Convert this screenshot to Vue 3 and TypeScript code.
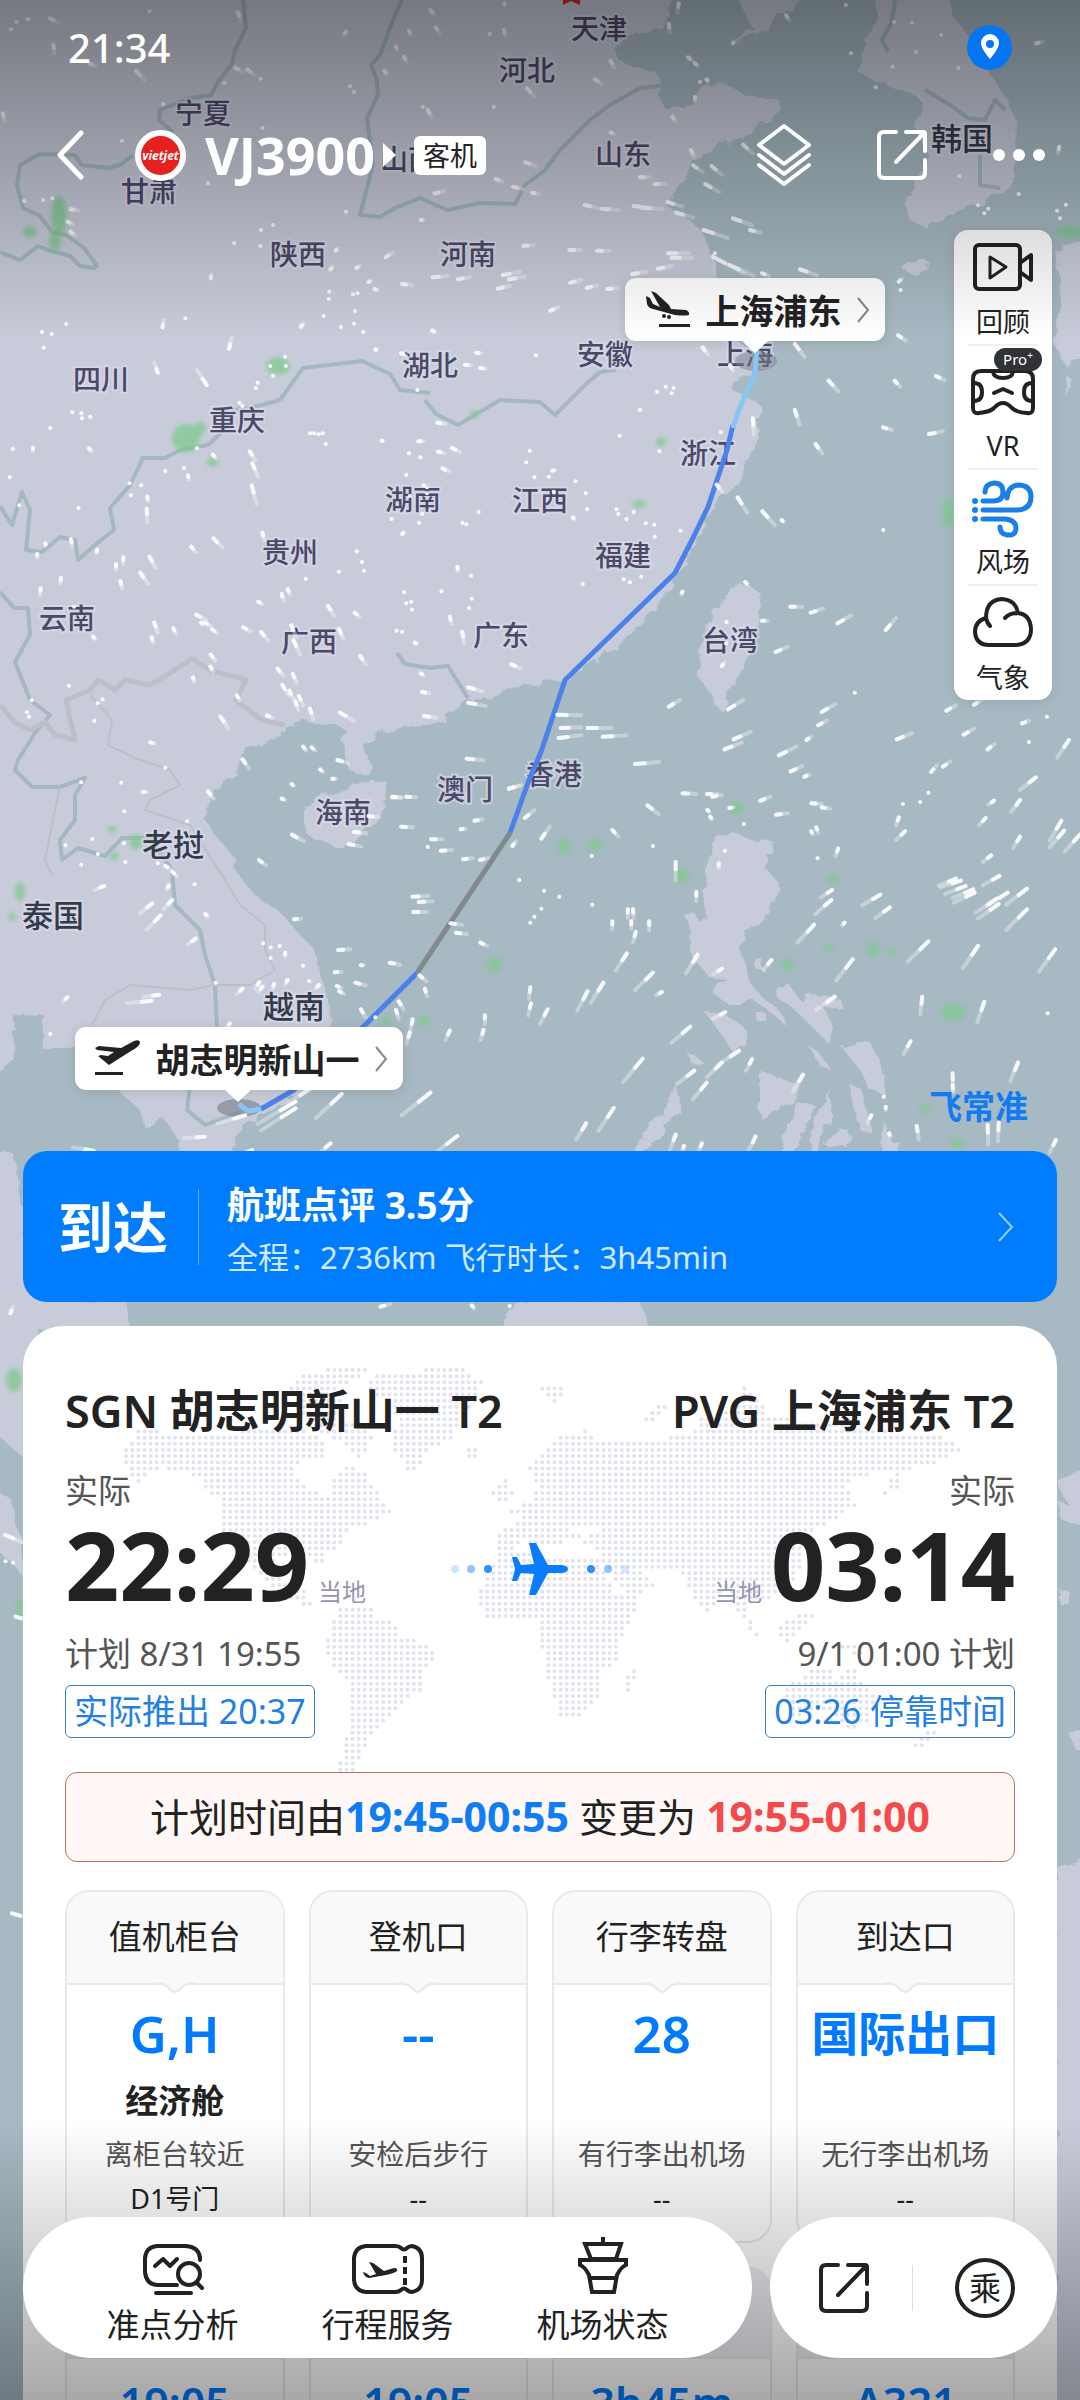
<script setup lang="ts">
type Pair = [number, number]

interface WindTile {
  x: number
  y: number
  heads: string
}

interface Streak {
  x1: number
  y1: number
  x2: number
  y2: number
  mx: number
  my: number
}

interface Place {
  name: string
  x: number
  y: number
  country?: boolean
}

interface InfoCard {
  title: string
  value: string
  cjk?: boolean
  sub?: string
  hint?: string
  detail?: string
}

const places: Place[] = [
  { name: '天津', x: 599, y: 28 },
  { name: '河北', x: 527, y: 70 },
  { name: '宁夏', x: 203, y: 113 },
  { name: '甘肃', x: 149, y: 191 },
  { name: '山西', x: 408, y: 159 },
  { name: '山东', x: 623, y: 154 },
  { name: '陕西', x: 298, y: 254 },
  { name: '河南', x: 468, y: 254 },
  { name: '四川', x: 101, y: 379 },
  { name: '湖北', x: 430, y: 365 },
  { name: '安徽', x: 605, y: 354 },
  { name: '上海', x: 745, y: 354 },
  { name: '重庆', x: 237, y: 420 },
  { name: '浙江', x: 708, y: 453 },
  { name: '湖南', x: 413, y: 499 },
  { name: '江西', x: 540, y: 500 },
  { name: '贵州', x: 290, y: 552 },
  { name: '福建', x: 623, y: 555 },
  { name: '云南', x: 67, y: 618 },
  { name: '广西', x: 309, y: 641 },
  { name: '广东', x: 501, y: 635 },
  { name: '台湾', x: 730, y: 640 },
  { name: '澳门', x: 465, y: 789 },
  { name: '香港', x: 554, y: 774 },
  { name: '海南', x: 343, y: 812 },
  { name: '老挝', x: 173, y: 845, country: true },
  { name: '泰国', x: 53, y: 916, country: true },
  { name: '越南', x: 294, y: 1007, country: true },
  { name: '韩国', x: 962, y: 139, country: true },
]

// Each entry is "head x, head y, tail dx, tail dy" in a third-of-a-pixel grid of its tile.
const windTiles: WindTile[] = [
  {
    x: 0,
    y: 0,
    heads:
      '145 55 25 15|80 57 5 0|48 66 0 0|32 88 0 0|434 34 0 0|155 135 3 25|690 36 10 28|260 190 20 10|395 212 25 30|683 203 22 12|718 208 22 18|757 236 0 0|652 248 0 0|474 313 0 0|1016 259 0 0|1028 276 0 0|1250 30 12 15|1265 82 12 18|1005 95 -8 12|1188 92 4 14|1150 140 3 8|1173 170 8 16|1116 213 8 10|1422 102 0 0|1463 90 5 18|1465 10 0 5|1530 265 22 24|1228 320 0 0|1242 330 12 22|1434 320 0 0|8 340 6 22|354 423 0 0|762 384 0 0|850 480 0 0|604 550 0 0|205 628 22 3|196 665 16 8|205 695 12 10|125 600 0 0|70 603 0 0|152 595 0 0|1005 635 0 0|1222 660 8 0|1262 580 28 -6|1440 537 20 8|1490 560 30 8|1525 487 30 10|1545 578 20 4|793 675 0 0|758 690 0 0|756 738 0 0|680 729 0 0|975 752 5 -6|1120 772 20 -14|960 808 6 -8|1035 804 10 -6|1070 846 8 -4|1088 867 8 3|1168 852 30 3|1256 832 45 -4|1330 838 35 -7|1460 825 50 -9|1478 838 45 -8|1446 866 35 -9|1520 738 30 -3|612 835 2 -12|956 875 0 0|955 897 0 0|1025 883 0 0|1038 880 0 0|1031 933 0 0|940 948 0 0|874 980 8 -10|990 981 0 0|1028 971 0 0|1055 996 0 0|1255 992 10 5|192 972 0 0|122 996 0 0|150 1002 0 0|127 1043 0 0|472 982 3 -22|538 955 0 0|665 1046 8 -32|458 1118 -10 -30|600 1155 -28 -45|785 1098 0 0|828 1070 0 0|830 1098 0 0|793 1127 0 0|748 1148 0 0|743 1164 0 0|1165 1060 15 6|1383 1058 15 2|1350 1094 18 2|1395 1104 15 2|1090 1048 4 2|1212 1170 0 0|1556 1066 0 0',
  },
  {
    x: 540,
    y: 0,
    heads:
      '403 10 -4 28|374 72 3 26|205 182 10 20|160 238 20 14|430 172 12 10|450 190 8 8|465 245 0 0|484 238 4 6|450 292 0 10|715 46 8 15|385 350 8 14|205 397 10 5|888 15 0 0|560 130 4 -6|903 160 0 0|1080 68 0 0|1092 156 0 0|1165 105 0 0|1215 204 0 0|1440 130 20 -5|975 262 0 0|1028 66 0 0|1024 200 0 0|438 450 12 24|590 434 28 26|445 496 26 20|498 498 30 26|480 552 40 24|290 532 30 0|333 553 30 -2|370 606 44 14|395 638 50 14|130 615 40 10|180 626 48 4|272 618 40 4|296 623 60 5|560 655 55 20|610 690 30 8|475 690 70 24|502 770 90 50|550 795 70 32|645 820 20 8|85 750 35 0|166 752 35 0|372 760 60 0|382 773 60 0|342 806 40 -8|268 822 40 -6|88 848 32 -8|136 864 30 -8|196 867 30 -2|30 932 24 -10|755 808 50 18|508 760 0 0|1508 440 -4 20|1218 528 0 0|1390 582 0 0|1290 640 0 0|1302 626 0 0|1272 616 0 0|1502 632 0 0|1527 614 0 0|1510 655 0 0|1042 845 8 -8|1047 870 0 0|1040 1006 22 16|740 1032 28 38|472 1042 16 22|838 1142 28 32|1150 1128 24 12|1030 1142 16 18|552 1095 8 16|365 1160 0 0|388 1164 0 0|340 1175 0 0|382 1180 0 0',
  },
  {
    x: 0,
    y: 400,
    heads:
      '210 37 0 0|236 40 0 0|238 55 0 0|262 50 0 0|146 84 0 0|96 143 0 10|258 145 8 8|37 147 0 0|28 232 0 0|695 8 0 0|704 18 0 0|900 100 0 0|912 100 0 0|925 103 0 0|937 100 0 0|946 132 0 0|725 154 16 26|733 190 16 40|731 256 14 55|572 145 0 0|618 164 10 12|480 213 0 0|534 203 0 0|546 226 2 14|376 250 0 0|410 256 0 0|380 286 0 0|428 290 2 14|426 326 2 40|56 316 0 0|228 324 0 0|1108 122 6 0|1215 124 16 0|1270 68 24 4|1312 144 24 12|1272 155 20 5|1188 160 0 0|1221 172 0 0|1285 205 20 10|1180 225 0 0|1240 262 0 0|1230 256 0 0|1190 288 0 0|1240 280 0 0|1137 357 0 0|1217 368 0 0|1168 402 6 -6|1343 369 0 0|1354 373 0 0|1390 336 0 0|1538 152 0 0|1528 187 0 0|1552 232 0 0|1226 342 0 0|132 430 0 8|108 462 0 10|206 418 4 20|282 450 -2 10|358 472 0 20|337 492 0 18|434 470 18 34|407 518 24 34|350 544 4 20|177 534 -2 16|118 565 -2 20|620 415 26 28|555 440 14 16|762 398 6 22|215 620 0 0|270 710 8 8|448 668 10 30|503 684 8 18|440 712 6 16|570 644 28 16|595 668 18 12|584 668 6 6|616 688 14 12|706 682 22 12|758 696 22 26|836 568 6 16|818 582 6 20|888 537 0 0|750 605 12 8|984 515 0 0|1051 486 0 0|1057 512 0 0|1036 454 0 0|953 618 16 28|1030 638 14 12|846 676 14 34|852 720 20 44|985 688 12 28|1174 577 0 0|1180 610 0 0|1194 605 0 0|1196 629 0 0|1282 574 0 0|1328 500 2 14|1368 527 0 0|1370 596 0 0|1362 624 0 0|1306 650 6 22|1342 695 6 36|1152 692 0 0|1168 695 0 0|1205 728 6 4|1046 768 16 24|1496 690 0 0|1485 793 26 12|1222 820 8 6|1226 876 20 4|1360 862 40 12|1360 908 50 10|1232 948 36 6|988 938 40 24|612 764 14 18|611 800 8 14|560 832 4 12|806 806 16 20|850 822 12 26|820 855 18 30|840 872 12 24|868 888 12 28|858 905 8 24|900 926 10 32|688 886 8 16|640 950 24 36|775 946 16 8|704 1078 20 28|880 1040 10 12|905 1042 10 10|980 1080 32 10|930 1108 8 8|965 1136 10 0|847 1152 6 6|1355 1076 48 4|1478 1166 30 -10|1140 1190 24 4|1180 1190 28 2|604 1174 16 22|818 1196 10 4|200 857 0 0|298 898 0 0|284 910 0 0|92 901 0 0|78 937 0 0|84 950 0 0|274 962 0 0|436 1027 14 4|480 1103 0 0|352 1148 0 0|415 1176 12 0|236 1147 0 0',
  },
  {
    x: 540,
    y: 300,
    heads:
      '290 329 0 0|231 407 0 0|525 397 0 0|347 454 0 0|36 512 8 -2|26 530 0 0|103 544 0 0|133 580 0 0|137 628 0 0|96 652 4 6|222 628 0 0|227 642 0 0|251 657 0 0|272 636 0 0|307 670 0 0|332 674 0 0|333 710 0 0|408 692 0 0|243 838 0 0|261 847 0 0|294 830 0 0|124 852 0 0|40 575 0 0|513 554 16 22|618 355 4 50|574 592 28 46|646 634 36 42|702 660 6 6|740 330 14 44|800 432 20 28|996 382 26 8|1130 402 40 -8|997 690 0 0|596 846 8 8|414 875 -4 8|727 920 34 0|786 938 36 -12|645 962 16 0|864 970 40 -24|1004 990 30 -36|684 1056 36 -16|542 966 0 0|528 1098 8 -10|540 1030 0 0|374 1220 32 -20|546 1228 44 -28|818 1236 40 -24|1180 1232 28 -16|1260 1214 20 -12|914 1178 0 0|1472 1250 0 0|50 1244 70 2',
  },
  {
    x: 0,
    y: 780,
    heads:
      '848 164 34 20|752 240 20 16|854 418 20 -2|982 510 36 -2|972 577 20 -2|1048 556 8 0|1132 548 30 6|1032 608 30 8|978 618 14 6|985 634 14 8|1028 156 36 4|1012 192 36 8|1070 108 30 4|1165 140 34 2|1138 52 30 0|1252 178 34 0|1242 201 0 0|1280 212 34 -2|1338 148 14 -2|1378 122 24 -4|1345 238 28 -4|1394 240 24 -6|1488 198 10 -14|1524 114 28 -24|1478 26 36 -10|1508 300 0 0|1198 350 46 -2|1216 366 40 -2|1200 396 40 0|1308 430 34 4|1324 458 32 4|1395 488 20 10|1540 428 0 0|1552 410 0 0|1218 586 20 18|1234 626 6 22|1158 664 14 24|1150 690 8 26|1198 718 -6 34|1190 758 -10 34|1048 688 14 24|1306 752 -12 28|1408 706 0 26|1404 750 -8 30|1540 622 -4 34|1542 670 -8 36|1090 712 0 0|302 318 -28 12|442 370 -36 30|466 406 -40 44|500 360 -26 28|490 316 -6 12|268 177 0 0|190 196 0 0|284 222 0 0|364 246 0 0|360 190 0 0|236 254 0 0|458 250 0 0|480 258 16 10|500 275 14 14|565 313 0 0|596 402 8 8|568 476 -24 18|543 124 0 0|361 94 0 0|764 490 0 0|786 502 0 0|812 498 0 0|828 518 0 12|786 534 0 0|880 557 0 0|835 600 -6 12|898 603 0 0|926 615 -10 12|753 606 -12 20|762 620 -12 16|704 626 -16 16|796 612 -4 14|626 608 0 0|668 730 -8 10|462 644 -45 6|440 662 -70 8|196 652 -12 12|146 762 0 0|992 942 -74 72|1250 938 -84 68|1328 1068 -76 60|960 1090 -36 32|895 930 -60 40|858 965 -110 66|858 985 -100 66|712 1006 -80 24|595 1070 -60 4|272 1112 -60 -10|732 1110 -40 18',
  },
  {
    x: 540,
    y: 720,
    heads:
      '60 24 60 -2|138 24 70 0|54 54 66 -8|182 50 70 -4|276 132 70 -6|562 58 50 -22|536 88 50 -20|694 106 50 -26|774 60 14 -10|728 154 34 -16|768 170 14 -6|808 16 24 -14|1036 58 44 -18|1230 44 30 -18|1300 88 20 -16|1400 10 20 -8|1420 66 0 0|1536 60 -34 52|1440 172 -46 38|1136 156 16 -20|1170 140 22 -16|1128 218 0 0|1104 246 0 0|1054 252 0 0|1318 242 -16 12|1394 240 -26 36|1294 294 -20 22|1042 292 -8 24|1060 334 -26 26|1514 302 -34 60|1522 332 -42 50|1568 344 -44 50|1394 350 -20 34|1310 406 -24 20|414 220 40 2|485 222 30 0|500 230 28 -4|312 256 32 26|210 330 18 20|328 378 0 0|150 408 0 0|4 356 24 -36|486 270 6 6|494 290 6 8|550 264 12 -2|592 312 0 0|640 242 30 -12|686 284 34 -4|788 250 30 2|818 262 24 4|788 334 4 8|802 322 6 16|866 386 -8 22|806 415 0 0|537 392 0 0|519 430 0 14|394 426 0 55|454 516 0 28|12 512 0 0|56 530 0 0|152 554 0 0|4 566 0 0|255 568 0 26|270 568 2 26|210 604 0 24|265 604 0 24|317 604 0 28|278 636 -8 30|252 700 -32 52|328 758 -52 52|354 816 -16 10|184 788 -36 60|138 814 -30 58|22 868 -22 44|458 704 -34 56|528 746 -24 16|672 720 -24 30|908 718 -48 64|848 510 -32 22|846 540 -46 42|988 524 -52 32|1016 562 -42 32|796 614 -48 54|884 608 -6 8|1208 476 -50 20|1222 482 -60 20|1236 498 -60 24|1258 508 -60 26|1262 518 -60 30|1334 468 -48 28|1326 536 -60 42|1358 518 -60 40|1332 552 -60 44|1414 506 -60 48|1414 568 -60 62|1128 664 -60 60|1272 678 -44 66|1496 688 -46 66|1110 830 -6 54|1290 846 -20 60|1474 880 0 0|1076 964 -20 38|856 830 -54 40|538 876 -36 20|436 920 -54 48|578 992 -60 42|528 1028 -44 44|448 1052 -50 40|484 1088 -40 50|298 1016 -56 70|214 1164 -44 68|134 1210 -28 48|616 1018 -18 34|764 1064 -30 50|1388 1028 -22 54|1198 1060 2 50|1198 1096 2 20|1300 1214 2 60|1332 1208 -2 56|1094 1218 6 40|1498 1260 -18 38|998 1130 0 0|1004 1160 0 10|962 1186 -10 22|1014 1240 4 10|394 1244 -16 44|418 1278 -4 12|470 1270 -8 22|626 1250 -20 42',
  },
  {
    x: 0,
    y: 1300,
    heads:
      '15 705 60 26|45 950 40 12|16 784 0 0|38 788 0 0|30 40 8 -20|1105 20 28 -8|1370 16 8 10|1480 18 0 0|35 1840 60 18',
  },
]

const streaks: Streak[] = windTiles.flatMap((tile) =>
  tile.heads.split('|').map((entry) => {
    const [hx, hy, dx, dy] = entry.split(' ').map(Number)
    const x1 = tile.x + hx / 2.904
    const y1 = tile.y + hy / 3
    const x2 = x1 + dx / 2.904
    const y2 = y1 + dy / 3
    return { x1, y1, x2, y2, mx: x1 + (x2 - x1) * 0.4, my: y1 + (y2 - y1) * 0.4 }
  }),
)

const rainSpots = [
  [59, 216, 8, 20], [30, 232, 7, 6], [55, 242, 6, 10], [278, 366, 12, 9], [186, 438, 14, 14], [200, 428, 6, 7],
  [213, 462, 6, 5], [474, 414, 4, 4], [661, 442, 5, 5], [639, 504, 7, 4], [948, 513, 6, 15], [1070, 232, 14, 6],
  [136, 842, 7, 8], [114, 856, 5, 4], [112, 829, 4, 4], [20, 892, 5, 10], [12, 917, 4, 4], [494, 965, 7, 8],
  [386, 1021, 6, 5], [423, 1021, 6, 5], [737, 808, 6, 7], [564, 847, 6, 9], [595, 845, 7, 6], [682, 876, 7, 8],
  [833, 879, 6, 5], [828, 948, 5, 4], [873, 949, 6, 8], [891, 951, 4, 4], [788, 965, 6, 6], [953, 1012, 12, 9],
  [957, 1144, 7, 5], [925, 1109, 5, 5], [14, 1380, 8, 12], [20, 1608, 4, 10],
]

const continents: Pair[][] = [
  [[138, 1430], [200, 1434], [276, 1429], [311, 1432], [328, 1444], [326, 1458], [296, 1463], [292, 1477], [307, 1486], [326, 1500], [334, 1478], [345, 1466], [364, 1472], [378, 1492], [391, 1511], [374, 1521], [349, 1530], [338, 1548], [325, 1552], [325, 1568], [312, 1560], [290, 1552], [276, 1562], [276, 1578], [300, 1584], [314, 1608], [290, 1600], [262, 1578], [240, 1555], [224, 1532], [222, 1502], [206, 1488], [196, 1476], [160, 1466], [136, 1484], [122, 1456]],
  [[288, 1390], [296, 1378], [326, 1369], [368, 1369], [356, 1380], [340, 1388], [344, 1420], [366, 1424], [374, 1440], [356, 1460], [340, 1440], [310, 1428], [296, 1408]],
  [[366, 1386], [376, 1376], [410, 1376], [424, 1369], [466, 1369], [482, 1382], [474, 1406], [460, 1420], [453, 1441], [428, 1447], [416, 1470], [405, 1468], [391, 1444], [398, 1424], [388, 1404]],
  [[462, 1448], [478, 1449], [480, 1458], [468, 1459]],
  [[336, 1610], [373, 1608], [378, 1620], [392, 1621], [400, 1635], [430, 1644], [436, 1653], [423, 1674], [422, 1690], [404, 1701], [392, 1718], [370, 1734], [362, 1756], [353, 1772], [338, 1772], [346, 1738], [352, 1704], [352, 1680], [338, 1674], [325, 1652], [330, 1632]],
  [[492, 1490], [506, 1480], [514, 1498], [494, 1502]],
  [[541, 1388], [566, 1386], [560, 1400], [552, 1405]],
  [[640, 1424], [660, 1402], [668, 1406], [650, 1426]],
  [[498, 1531], [521, 1520], [509, 1511], [530, 1500], [537, 1486], [528, 1470], [541, 1452], [560, 1436], [586, 1431], [596, 1442], [660, 1443], [672, 1434], [694, 1434], [697, 1420], [734, 1411], [742, 1386], [755, 1392], [768, 1417], [850, 1424], [902, 1433], [943, 1436], [961, 1450], [936, 1464], [905, 1470], [897, 1490], [884, 1495], [892, 1474], [850, 1475], [847, 1487], [856, 1504], [838, 1520], [812, 1530], [803, 1552], [797, 1578], [768, 1600], [742, 1598], [750, 1618], [766, 1648], [754, 1638], [738, 1612], [728, 1584], [716, 1598], [710, 1618], [697, 1602], [686, 1580], [676, 1572], [642, 1572], [655, 1586], [634, 1599], [637, 1608], [622, 1634], [617, 1662], [601, 1672], [600, 1694], [586, 1714], [561, 1716], [552, 1696], [546, 1668], [542, 1646], [541, 1622], [488, 1620], [479, 1604], [482, 1580], [500, 1558], [498, 1548]],
  [[622, 1674], [636, 1668], [632, 1690], [622, 1697]],
  [[786, 1688], [810, 1670], [828, 1669], [838, 1680], [852, 1668], [868, 1686], [877, 1702], [868, 1722], [850, 1730], [826, 1711], [788, 1716]],
  [[774, 1630], [800, 1612], [812, 1616], [790, 1642], [776, 1638]],
  [[838, 1640], [866, 1646], [866, 1660], [842, 1650]],
  [[926, 1728], [938, 1728], [922, 1748], [908, 1754]],
]
const seas: Pair[][] = [
  [[520, 1540], [545, 1548], [575, 1540], [600, 1550], [600, 1556], [540, 1556], [514, 1548]],
  [[570, 1530], [590, 1524], [600, 1532], [584, 1537]],
  [[602, 1566], [608, 1566], [624, 1594], [618, 1596]],
]

function inside(x: number, y: number, shape: Pair[]): boolean {
  let hit = false
  for (let i = 0, j = shape.length - 1; i < shape.length; j = i++) {
    const [xi, yi] = shape[i]
    const [xj, yj] = shape[j]
    if (yi > y !== yj > y && x < ((xj - xi) * (y - yi)) / (yj - yi) + xi) hit = !hit
  }
  return hit
}

const worldDots: Pair[] = []
for (let y = 1370; y < 1772; y += 6.15) {
  for (let x = 120; x < 964; x += 6.12) {
    if (continents.some((c) => inside(x, y, c)) && !seas.some((s) => inside(x, y, s))) worldDots.push([x, y])
  }
}

const cards: InfoCard[] = [
  { title: '值机柜台', value: 'G,H', sub: '经济舱', hint: '离柜台较近', detail: 'D1号门' },
  { title: '登机口', value: '--', hint: '安检后步行', detail: '--' },
  { title: '行李转盘', value: '28', hint: '有行李出机场', detail: '--' },
  { title: '到达口', value: '国际出口', cjk: true, hint: '无行李出机场', detail: '--' },
]

const moreCards: string[] = ['19:05', '19:05', '3h45m', 'A321']
</script>

<template>
  <main class="screen">
    <svg class="map" viewBox="0 0 1080 2400" preserveAspectRatio="xMidYMin slice" aria-hidden="true">
      <defs>
        <filter id="coast" x="-2%" y="-2%" width="104%" height="104%">
          <feTurbulence type="fractalNoise" baseFrequency="0.07" numOctaves="3" seed="4" />
          <feDisplacementMap in="SourceGraphic" scale="11" />
        </filter>
        <filter id="soft"><feGaussianBlur stdDeviation="2" /></filter>
      </defs>
      <rect width="1080" height="2400" fill="#a7b9c3" />
      <g fill="#c8ccda" filter="url(#coast)">
        <path
          d="M-20-20H680L665 25 645 32 630 35 614 48 620 62 640 68 655 72 663 82 658 95 665 108 685 108 700 92 722 82 745 95 780 100 783 112 770 122 752 128 735 140 720 145 700 158 690 165 685 180 672 195 668 207 690 220 703 233 714 262 722 285 735 340 758 352 752 372 735 382 732 390 748 398 760 405 758 438 750 460 738 483 727 490 715 503 708 520 700 535 690 550 680 572 672 590 650 612 625 638 595 660 565 680 530 684 500 695 470 700 455 710 440 722 400 728 380 733 364 748 372 765 370 775 350 772 345 755 342 740 348 730 330 725 305 722 290 727 258 745 240 755 235 775 220 788 203 817 215 835 232 855 235 870 255 895 280 912 300 935 315 950 328 1000 330 1020 325 1060 315 1085 270 1110 240 1130 236 1145 200 1175 178 1170 180 1142 165 1120 145 1128 140 1110 118 1090 100 1060 75 1048 43 1050 43 1015 14 1016 14 1060 -20 1090Z"
        />
        <path d="M738-20V0L748 18 755 30 735 38V43L760 32 775 20 800 0V-20ZM878-20L875 25 865 48 857 72 880 82 915 95 925 105 915 130 930 158 915 180 912 195 905 205 910 220 925 228 965 208 1000 195 1010 185 1017 160 1015 120 1008 100 990 75 975 45 952 15V-20Z" />
        <path d="M903 270Q912 258 929 262 930 272 915 276ZM1055 250L1100 236V350L1066 366 1054 345 1062 300ZM1066 375L1072 380 1066 396Z" />
        <path d="M746 583L762 595 758 620 750 650 742 670 728 695 722 711 715 705 712 695 697 675 702 640 712 615 728 593ZM340 790L355 783 385 780 388 795 375 820 362 835 345 848 325 842 308 835 305 815 315 798Z" />
        <path d="M714 835L735 832 755 842 765 838 773 842 767 870 779 883 776 898 768 915 747 932 740 950 752 985 765 1000 780 1010 786 1025 765 1008 750 998 742 1005 730 1005 715 995 716 985 728 980 710 978 695 960 690 935 686 915 692 910 700 922 708 918 704 900 706 870Z" />
        <path d="M775 985L790 985 800 1000 810 995 825 1010 835 1030 830 1045 805 1020 795 1010 778 998ZM805 995L840 998 842 1008 826 1006ZM705 1012L722 1013 745 1028 745 1045 733 1052 722 1035ZM840 1045L870 1042 880 1060 886 1095 870 1090 858 1068ZM850 1085L862 1090 868 1120 875 1135 860 1130ZM760 1070L800 1085 795 1100 775 1110 760 1118ZM795 1103L815 1105 805 1130 790 1160H775L790 1120ZM830 1090V1120L815 1160H806L815 1120ZM808 1045L818 1052 832 1070 820 1066ZM824 1145L838 1128 850 1132 846 1146ZM756 960H763L764 970H757ZM756 1013H766V1021H757ZM690 1055L704 1062 700 1066 692 1064Z" />
        <path d="M675 1085L683 1115 665 1125 650 1145 635 1162 630 1155 660 1115ZM884 1120L890 1140 900 1142 898 1156H880ZM-20 1152H12L22 1200 26 1290 60 1302 126 1300 130 1330 40 1330 26 1460 -20 1420ZM496 1330L520 1302 640 1300 650 1330Z" />
        <path d="M1056 1480L1080 1470 1100 1500 1070 1510ZM1056 1500L1100 1510 1090 1530 1062 1520ZM1060 1590H1068V1604H1060ZM1070 1735L1100 1720V1752L1076 1750ZM1056 1868L1100 1850V2420H1056Z" />
        <path d="M-20 1480L12 1500 26 1570 40 1600 10 1560 -20 1540Z" />
      </g>
      <g class="rivers">
        <path d="M243 0L246 28 235 50 232 64 218 82 211 95 190 98 160 110 159 120 173 132 M133 155L120 165 108 168 82 165 75 155 40 154 20 165 17 185 23 208 40 216 52 232 66 235 84 248 97 266 94 268 80 266 70 256 48 250 38 246 20 260 0 252" />
        <path d="M402 0L393 20 380 55 371 65 377 80 378 95 367 118 373 165 360 215 380 217 395 208 420 198 447 210 480 203 515 204 525 185 545 170 560 150 590 120 610 105 640 88 667 85" />
        <path d="M280 400L303 368 362 361 390 374 400 390 430 393 M0 506L12 525 22 492 30 510 26 550 42 552 60 537 75 540 78 560 95 545 114 530 110 508 130 485 142 460 142 458 165 458 180 450 208 445 222 432 235 410 262 405 280 400" />
        <path d="M425 400L436 414 458 425 500 400 540 402 555 415 585 385 600 372 616 370 M0 592L14 608 28 608 30 635 15 662 30 700 50 715 35 733 18 760 15 770 32 787 60 787 85 778 75 795 75 820 60 840 62 860 78 848 105 856 122 838 150 838 172 870 175 905 200 930 205 955 215 985 217 1030 190 1085 187 1110 205 1125 240 1112" />
        <path d="M397 653L405 664 430 668 448 666 468 698 M895 0L892 22 882 40 888 52 M925 90L950 105 968 118 985 120 995 100 1005 110 M980 155V185L1000 188" />
      </g>
      <g class="borders">
        <path stroke-width="5" d="M0 704L14 722 30 730 45 722 55 735 75 740 66 700 90 690 98 680 115 690 125 680 150 685 172 672 192 658 210 670 246 680 236 700 262 720 285 725" />
        <path stroke-width="2" d="M90 695L112 720 108 745 135 758 170 770 180 785 150 800 145 810 190 825 225 880 240 905 265 925 265 950 275 970 250 985 215 985 190 990 130 985 105 1000 92 1025 M60 787L55 810 45 860 52 875" />
      </g>
      <g fill="#7fc98f" filter="url(#soft)" opacity="0.75">
        <ellipse v-for="(s, i) in rainSpots" :key="i" :cx="s[0]" :cy="s[1]" :rx="s[2]" :ry="s[3]" />
      </g>
      <path d="M571-10L575 0H580V5L571 1 563 5V0Z" fill="#d8232c" />
      <g class="places">
        <text v-for="p in places" :key="p.name" :x="p.x" :y="p.y + 11" :class="{ country: p.country }">{{ p.name }}</text>
      </g>
      <ellipse cx="756" cy="361" rx="21" ry="10" fill="#777b88" opacity="0.5" />
      <ellipse cx="239" cy="1108" rx="22" ry="9" fill="#777b88" opacity="0.6" />
      <g fill="none" stroke-width="5" stroke-linejoin="round">
        <path stroke="#4c80ea" d="M733 425L727 450 708 507 692 540 675 573 565 680 541 752 529 780 510 833M417 973L362 1028 294 1090 261 1109" />
        <path stroke="#82898e" d="M510 833L417 973" />
        <path stroke="#86c6f5" d="M757 345L755 375 745 395 737 415 733 428M239 1104L248 1111 261 1109" />
      </g>
      <g stroke="#fff" stroke-linecap="round" stroke-width="4">
        <line v-for="(s, i) in streaks" :key="'t' + i" :x1="s.x1" :y1="s.y1" :x2="s.x2" :y2="s.y2" opacity="0.35" />
        <line v-for="(s, i) in streaks" :key="'h' + i" :x1="s.x1" :y1="s.y1" :x2="s.mx" :y2="s.my" opacity="0.85" />
      </g>
    </svg>

    <section class="hero">
      <header class="top">
        <div class="status">
          <time>21:34</time>
          <span class="locate">
            <svg width="20" height="26" viewBox="0 0 20 26"><path fill="#fff" fill-rule="evenodd" d="M10 0a9 9 0 0 1 9 9c0 6-9 16-9 16S1 15 1 9a9 9 0 0 1 9-9Zm0 6a4 4 0 1 0 0 8 4 4 0 0 0 0-8Z" /></svg>
          </span>
        </div>
        <nav class="bar">
          <button class="back" aria-label="返回">
            <svg width="28" height="50" viewBox="0 0 28 50"><path d="M25 3L4 25 25 47" fill="none" stroke="#fff" stroke-width="5" stroke-linecap="round" stroke-linejoin="round" /></svg>
          </button>
          <span class="airline"><span>vietjet</span></span>
          <h1>VJ3900</h1>
          <svg class="tri" width="13" height="24" viewBox="0 0 13 24"><path d="M0 0L13 12 0 24Z" fill="#fff" /></svg>
          <span class="kind">客机</span>
          <button class="layers" aria-label="图层">
            <svg width="56" height="64" viewBox="0 0 56 64" fill="none" stroke="#fff" stroke-width="4" stroke-linejoin="round" stroke-linecap="round"><path d="M28 3L53 22 28 41 3 22Z" /><path d="M3 32L28 51 53 32M3 42L28 61 53 42" /></svg>
          </button>
          <button class="share" aria-label="分享">
            <svg width="52" height="52" viewBox="0 0 52 52" fill="none" stroke="#fff" stroke-width="4"><path d="M20 3H8Q3 3 3 8V44Q3 49 8 49H44Q49 49 49 44V31M30 3H47Q49 3 49 5V22M48 4L20 33" stroke-linecap="round" /></svg>
          </button>
          <button class="more" aria-label="更多">
            <svg width="54" height="14" viewBox="0 0 54 14" fill="#fff"><circle cx="7" cy="7" r="6" /><circle cx="27" cy="7" r="6" /><circle cx="47" cy="7" r="6" /></svg>
          </button>
        </nav>
      </header>

      <aside class="rail">
        <button class="tool first">
          <svg width="62" height="50" viewBox="0 0 62 50" fill="none" stroke="#222" stroke-width="4" stroke-linejoin="round"><rect x="3" y="3" width="45" height="44" rx="4" /><path d="M48 21L59 13V38L48 30" /><path d="M18 15L34 25 18 36Z" stroke-width="3" /></svg>
          <span>回顾</span>
        </button>
        <button class="tool vr">
          <em>Pro<sup>+</sup></em>
          <svg width="66" height="48" viewBox="0 0 66 48" fill="none" stroke="#222" stroke-width="4" stroke-linecap="round" stroke-linejoin="round"><path d="M11 3H55Q63 3 63 11V40Q63 46 57 45 46 44 42 40 33 30 24 40 20 44 9 45 3 46 3 40V11Q3 3 11 3Z" /><path d="M23 4Q24 10 33 10T43 4M4 15Q12 15 12 24T4 33M62 15Q54 15 54 24T62 33M24 25L33 21 42 25" /></svg>
          <span>VR</span>
        </button>
        <button class="tool">
          <svg width="62" height="58" viewBox="0 0 62 58" fill="none" stroke="#1a80e8" stroke-width="5" stroke-linecap="round"><path d="M11 21H21Q31 21 31 12T22 3Q13 4 13 12M11 30H46Q59 29 59 17T46 5Q36 6 35 18M11 39H33Q44 40 44 48T35 55Q28 54 28 47" /><path d="M3 21h0M3 30h0M3 39h0" stroke-width="6" /></svg>
          <span>风场</span>
        </button>
        <button class="tool">
          <svg width="62" height="52" viewBox="0 0 62 52" fill="none" stroke="#222" stroke-width="4" stroke-linecap="round"><path d="M14 22Q3 25 3 36 4 49 17 49H44Q59 48 59 33 58 17 44 17M14 22Q14 4 30 3 44 4 46 17M14 22Q15 27 18 30M46 17Q37 17 33 22" /></svg>
          <span>气象</span>
        </button>
      </aside>

      <button class="pin arrive">
        <svg width="46" height="40" viewBox="0 0 46 40" fill="#222"><path d="M1 6L5 8 8 14 15 17 6 1 11 3 24 15 26 19 41 20Q45 22 44 25 40 26 30 25L8 19Q3 18 2 14Z" /><circle cx="19" cy="26" r="2" /><circle cx="24" cy="27" r="2" /><rect x="14" y="34" width="31" height="3" /></svg>
        <span>上海浦东</span>
        <svg width="14" height="28" viewBox="0 0 14 28"><path d="M2 2L12 14 2 26" fill="none" stroke="#888" stroke-width="2" /></svg>
      </button>
      <button class="pin depart">
        <svg width="46" height="40" viewBox="0 0 46 40" fill="#222"><path d="M0 9L4 7 26 9 39 2Q45 0 45 4 44 8 36 12L14 26 3 17 6 16 13 17 19 13 2 11Z" /><rect x="0" y="33" width="28" height="3" /></svg>
        <span>胡志明新山一</span>
        <svg width="14" height="28" viewBox="0 0 14 28"><path d="M2 2L12 14 2 26" fill="none" stroke="#888" stroke-width="2" /></svg>
      </button>
      <span class="brand">飞常准</span>
    </section>

    <section class="sheet">
      <a class="banner" href="#">
        <strong class="state">到达</strong>
        <span class="summary">
          <b>航班点评 3.5分</b>
          <span>全程：2736km 飞行时长：3h45min</span>
        </span>
        <svg width="18" height="32" viewBox="0 0 18 32"><path d="M2 2L15 16 2 30" fill="none" stroke="#9ccbff" stroke-width="2" /></svg>
      </a>

      <article class="card">
        <svg class="world" viewBox="23 1326 1034 446" aria-hidden="true">
          <circle v-for="(d, i) in worldDots" :key="i" :cx="d[0]" :cy="d[1]" r="2" />
        </svg>
        <div class="route">
          <div class="end">
            <h2>SGN 胡志明新山一 T2</h2>
            <p class="muted">实际</p>
            <p class="clock"><b>22:29</b><small>当地</small></p>
            <p class="muted plan">计划 8/31 19:55</p>
            <p class="tag">实际推出 20:37</p>
          </div>
          <svg class="plane" width="186" height="62" viewBox="0 0 186 62" fill="#0a7cff">
            <circle cx="5" cy="31" r="4" opacity="0.2" /><circle cx="21" cy="31" r="4" opacity="0.45" /><circle cx="38" cy="31" r="4" opacity="0.85" />
            <path d="M79 5H86L98 27H112Q118 28 118 31T112 35H98L86 57H79L84 36 71 35 67 43H62L65 31 62 19H67L71 27 84 26Z" />
            <circle cx="141" cy="31" r="4" opacity="0.85" /><circle cx="158" cy="31" r="4" opacity="0.45" /><circle cx="175" cy="31" r="4" opacity="0.15" />
          </svg>
          <div class="end right">
            <h2>PVG 上海浦东 T2</h2>
            <p class="muted">实际</p>
            <p class="clock"><small>当地</small><b>03:14</b></p>
            <p class="muted plan">9/1 01:00 计划</p>
            <p class="tag">03:26 停靠时间</p>
          </div>
        </div>

        <p class="notice">计划时间由<b class="old">19:45-00:55</b> 变更为 <b class="new">19:55-01:00</b></p>

        <div class="grid">
          <section v-for="c in cards" :key="c.title" class="info">
            <h3>
              {{ c.title }}
              <svg width="40" height="12" viewBox="0 0 40 12"><path d="M0 1Q10 1 15 7 20 13 25 7 30 1 40 1" fill="#f9f9f9" stroke="#e9e9e9" stroke-width="2" /></svg>
            </h3>
            <strong :class="{ cjk: c.cjk }">{{ c.value }}</strong>
            <b>{{ c.sub }}</b>
            <span class="hint">{{ c.hint }}</span>
            <span class="detail">{{ c.detail }}</span>
          </section>
          <section v-for="(v, i) in moreCards" :key="i" class="info second">
            <h3></h3>
            <strong>{{ v }}</strong>
          </section>
        </div>
      </article>
    </section>

    <footer class="dock">
      <div class="pill menu">
        <button>
          <svg width="62" height="52" viewBox="0 0 62 52" fill="none" stroke="#222" stroke-width="4" stroke-linecap="round" stroke-linejoin="round"><path d="M58 17V15Q57 4 44 3H15Q4 4 3 15V29Q4 41 15 42H35M13 23L21 16 28 23 35 16M14 50H49" /><circle cx="47" cy="31" r="11" /><path d="M55 40L60 45" /></svg>
          <span>准点分析</span>
        </button>
        <button>
          <svg width="74" height="52" viewBox="0 0 74 52" fill="none" stroke="#222" stroke-width="4" stroke-linecap="round"><path d="M15 3H44Q48 3 50 5 53 8 56 5 58 3 61 3 71 5 71 15V37Q71 47 61 49 58 49 56 47 53 44 50 47 48 49 44 49H15Q4 48 3 37V15Q4 4 15 3Z" /><path d="M54 13V20M54 24V31M54 35V42" stroke-linecap="butt" /><path d="M12 29L15 30 19 33 25 31 18 19 22 20 33 28 43 25Q47 25 46 28 44 30 35 32L18 35Q13 34 12 29Z" fill="#222" stroke="none" /></svg>
          <span>行程服务</span>
        </button>
        <button>
          <svg width="52" height="58" viewBox="0 0 52 58" fill="none" stroke="#222" stroke-width="4"><path d="M26 0V6M8 7H44L39 22H14ZM3 23H49V28Q44 30 40 38L37 55H15L12 38Q8 30 3 28ZM12 41H40" /></svg>
          <span>机场状态</span>
        </button>
      </div>
      <div class="pill actions">
        <button aria-label="分享">
          <svg width="52" height="52" viewBox="0 0 52 52" fill="none" stroke="#222" stroke-width="4"><path d="M20 3H8Q3 3 3 8V44Q3 49 8 49H44Q49 49 49 44V31M30 3H47Q49 3 49 5V22M48 4L20 33" stroke-linecap="round" /></svg>
        </button>
        <i></i>
        <button class="ride">乘</button>
      </div>
    </footer>
  </main>
</template>

<style>
body {
  margin: 0;
}
</style>

<style scoped>
.screen {
  position: relative;
  height: 100vh;
  overflow: hidden;
  background: #a7b9c3;
  color: #222;
  font-family: "Noto Sans", "Noto Sans CJK SC", sans-serif;
}
.screen::before {
  content: "";
  position: absolute;
  inset: 0 0 auto;
  height: 340px;
  z-index: 2;
  background: linear-gradient(rgba(0, 0, 0, 0.41), rgba(0, 0, 0, 0));
  pointer-events: none;
}
.screen::after {
  content: "";
  position: absolute;
  inset: auto 0 0;
  height: 280px;
  z-index: 2;
  background: linear-gradient(rgba(0, 0, 0, 0), rgba(0, 0, 0, 0.34));
  pointer-events: none;
}
.map {
  position: absolute;
  inset: 0;
  width: 100%;
  height: 100%;
}
.rivers path {
  fill: none;
  stroke: #a4b8c1;
  stroke-width: 4;
  stroke-linejoin: round;
}
.borders path {
  fill: none;
  stroke: #bcbfcb;
  stroke-linejoin: round;
}
.places text {
  font-family: "Noto Sans CJK SC", sans-serif;
  font-size: 28px;
  font-weight: 500;
  text-anchor: middle;
  fill: #4c4868;
  stroke: rgba(216, 219, 235, 0.7);
  stroke-width: 4px;
  paint-order: stroke;
}
.places .country {
  font-size: 31px;
  fill: #343a48;
}
button {
  padding: 0;
  border: 0;
  background: none;
  color: inherit;
  font: inherit;
  cursor: pointer;
}
svg {
  display: block;
  flex: none;
}
p,
h1,
h2,
h3 {
  margin: 0;
}

.hero {
  position: relative;
  display: flex;
  flex-direction: column;
  min-height: 1151px;
}
.top {
  position: relative;
  z-index: 3;
  color: #fff;
}
.status {
  display: flex;
  align-items: center;
  justify-content: space-between;
  height: 94px;
  padding: 0 68px;
}
.status time {
  font-size: 40px;
  font-weight: 500;
}
.locate {
  display: flex;
  align-items: center;
  justify-content: center;
  width: 45px;
  height: 45px;
  border-radius: 50%;
  background: #0675f2;
}
.bar {
  display: flex;
  align-items: center;
  height: 122px;
  padding: 0 34px 0 56px;
}
.airline {
  display: flex;
  align-items: center;
  justify-content: center;
  width: 39px;
  height: 39px;
  margin-left: 51px;
  border: 6px solid #fff;
  border-radius: 50%;
  background: #e5201f;
  font-size: 12px;
  font-style: italic;
  font-weight: 700;
}
.bar h1 {
  margin-left: 19px;
  font-size: 52px;
  font-weight: 700;
  line-height: 60px;
}
.tri {
  margin-left: 8px;
}
.kind {
  margin-left: 18px;
  padding: 0 9px;
  border-radius: 6px;
  background: #fff;
  color: #222;
  font-size: 27px;
  line-height: 39px;
}
.layers {
  margin-left: auto;
}
.share {
  margin-left: 64px;
}
.more {
  margin-left: 64px;
}
.rail {
  align-self: flex-end;
  width: 98px;
  margin: 14px 28px 0 0;
  border-radius: 14px;
  background: #fff;
  box-shadow: 0 2px 12px rgba(0, 0, 0, 0.1);
}
.tool {
  position: relative;
  display: flex;
  flex-direction: column;
  align-items: center;
  justify-content: space-between;
  box-sizing: border-box;
  width: 100%;
  height: 116px;
  padding: 12px 0 4px;
  font-size: 27px;
  line-height: 36px;
}
.tool + .tool::before {
  content: "";
  position: absolute;
  top: 0;
  left: 14px;
  right: 14px;
  height: 2px;
  background: #eef0f3;
}
.tool.first {
  height: 114px;
}
.tool.vr {
  height: 124px;
  padding-top: 24px;
}
.tool em {
  position: absolute;
  top: 4px;
  right: 10px;
  width: 48px;
  border-radius: 12px;
  background: #303236;
  color: #fff;
  font: 15px/23px "Noto Sans", sans-serif;
}
.tool sup {
  font-size: 10px;
  line-height: 1px;
}
.pin {
  position: absolute;
  display: flex;
  align-items: center;
  justify-content: space-between;
  height: 63px;
  padding: 0 15px 0 20px;
  border-radius: 11px;
  background: #fff;
  box-shadow: 0 2px 12px rgba(0, 0, 0, 0.12);
  font-size: 34px;
  font-weight: 600;
}
.pin::after {
  content: "";
  position: absolute;
  top: 62px;
  border: 14px solid transparent;
  border-top: 13px solid #fff;
  border-bottom: 0;
}
.arrive {
  top: 278px;
  left: 625px;
  width: 260px;
}
.arrive::after {
  left: 116px;
}
.depart {
  top: 1027px;
  left: 75px;
  width: 328px;
}
.depart::after {
  left: 149px;
}
.brand {
  position: absolute;
  right: 52px;
  bottom: 20px;
  color: #117bf2;
  font-size: 33px;
  font-weight: 700;
  line-height: 48px;
}

.sheet {
  position: relative;
  padding: 0 23px;
}
.banner {
  display: flex;
  align-items: center;
  height: 151px;
  padding: 0 42px 0 35px;
  border-radius: 24px;
  background: #007dff;
  color: #fff;
  text-decoration: none;
}
.state {
  padding-right: 30px;
  border-right: 1px solid rgba(255, 255, 255, 0.4);
  font-size: 55px;
  line-height: 76px;
}
.summary {
  display: flex;
  flex: 1;
  flex-direction: column;
  gap: 8px;
  padding: 8px 0 0 28px;
  color: #d4e9ff;
  font-size: 31px;
  line-height: 44px;
}
.summary b {
  color: #fff;
  font-size: 37px;
}
.card {
  position: relative;
  margin-top: 24px;
  padding: 60px 42px 60px;
  border-radius: 40px;
  background: #fff;
}
.world {
  position: absolute;
  top: 0;
  left: 0;
  width: 100%;
  fill: #e1e4ee;
}
.route {
  position: relative;
  display: flex;
  justify-content: space-between;
}
.end {
  display: flex;
  flex-direction: column;
  align-items: flex-start;
}
.end.right {
  align-items: flex-end;
}
.end h2 {
  font-size: 45px;
  font-weight: 600;
  line-height: 50px;
  white-space: nowrap;
}
.plane {
  position: absolute;
  top: 152px;
  left: 50%;
  margin-left: -90px;
}
.muted {
  margin-top: 35px;
  color: #555;
  font-size: 33px;
  line-height: 40px;
}
.clock {
  display: flex;
  align-items: baseline;
  gap: 9px;
  margin-top: 5px;
  line-height: 96px;
}
.clock b {
  font-size: 95px;
}
.clock small {
  color: #9694b2;
  font-size: 24px;
  line-height: 24px;
}
.plan {
  margin-top: 22px;
}
.tag {
  margin-top: 11px;
  padding: 0 8px;
  border: 1px solid #3a82c4;
  border-radius: 6px;
  color: #2380e2;
  font-size: 34px;
  line-height: 51px;
}
.notice {
  position: relative;
  margin-top: 34px;
  border: 1px solid #b9705f;
  border-radius: 12px;
  background: #fff8f7;
  font-size: 39px;
  line-height: 88px;
  text-align: center;
  white-space: pre-wrap;
}
.notice b {
  font-size: 41px;
  line-height: 1px;
}
.old {
  color: #0f7df5;
}
.new {
  color: #f44a4c;
}
.grid {
  display: grid;
  grid-template-columns: repeat(4, 1fr);
  gap: 24px;
  margin-top: 28px;
}
.info {
  display: flex;
  flex-direction: column;
  align-items: center;
  box-sizing: border-box;
  min-width: 0;
  height: 353px;
  border: 2px solid #e9e9e9;
  border-radius: 24px;
  white-space: nowrap;
}
.info h3 {
  position: relative;
  box-sizing: border-box;
  width: 100%;
  height: 93px;
  border-bottom: 2px solid #e9e9e9;
  border-radius: 22px 22px 0 0;
  background: #f9f9f9;
  font-size: 33px;
  font-weight: 400;
  line-height: 90px;
  text-align: center;
}
.info h3 svg {
  position: absolute;
  top: 90px;
  left: 50%;
  margin-left: -20px;
}
.info strong {
  margin-top: 18px;
  color: #007bff;
  font-size: 51px;
  font-weight: 600;
  line-height: 60px;
}
.info .cjk {
  font-size: 47px;
}
.info b {
  height: 40px;
  margin-top: 18px;
  font-size: 33px;
  line-height: 40px;
}
.hint {
  margin-top: 16px;
  color: #555;
  font-size: 28px;
  line-height: 34px;
}
.detail {
  margin-top: 11px;
  font-size: 27px;
  line-height: 34px;
}
.second h3 {
  height: 90px;
  background: #eceef5;
}
.second strong {
  margin-top: 14px;
  font-size: 43px;
}

.dock {
  position: absolute;
  z-index: 3;
  left: 23px;
  right: 23px;
  bottom: 42px;
  display: grid;
  grid-template-columns: 729fr 287fr;
  gap: 18px;
}
.pill {
  display: flex;
  align-items: center;
  box-sizing: border-box;
  height: 141px;
  border-radius: 71px;
  background: #fff;
}
.menu {
  align-items: flex-end;
  padding: 0 42px 11px;
}
.menu button {
  display: flex;
  flex: 1;
  flex-direction: column;
  align-items: center;
  gap: 8px;
  font-size: 33px;
  line-height: 44px;
}
.actions {
  justify-content: space-between;
  padding: 0 42px 0 48px;
}
.actions i {
  width: 1px;
  height: 46px;
  background: #ddd;
}
.ride {
  width: 60px;
  height: 60px;
  border: 4px solid #222;
  border-radius: 50%;
  font-size: 32px;
  line-height: 50px;
}
</style>
